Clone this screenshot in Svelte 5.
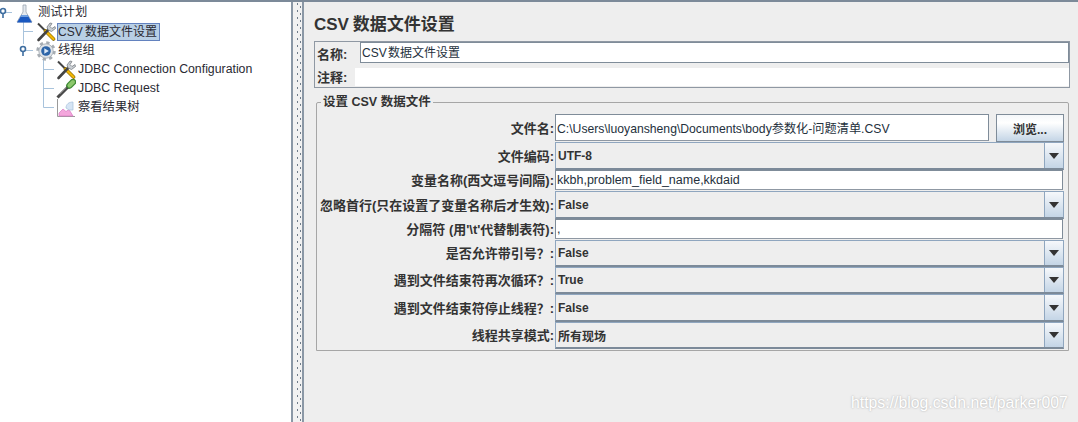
<script>
  const rows = [
    { label: "文件名:", kind: "file", value: "C:\\Users\\luoyansheng\\Documents\\body参数化-问题清单.CSV", h: 28 },
    { label: "文件编码:", kind: "combo", value: "UTF-8", h: 28 },
    { label: "变量名称(西文逗号间隔):", kind: "text", value: "kkbh,problem_field_name,kkdaid", h: 21 },
    { label: "忽略首行(只在设置了变量名称后才生效):", kind: "combo", value: "False", h: 28 },
    { label: "分隔符 (用'\\t'代替制表符):", kind: "text", value: ",", h: 21 },
    { label: "是否允许带引号\uFF1F:", kind: "combo", value: "False", h: 27 },
    { label: "遇到文件结束符再次循环\uFF1F:", kind: "combo", value: "True", h: 27 },
    { label: "遇到文件结束符停止线程\uFF1F:", kind: "combo", value: "False", h: 28 },
    { label: "线程共享模式:", kind: "combo", value: "所有现场", h: 27 }
  ];
</script>

<style>
  :global(body) {
    margin: 0;
    background: #eeeeee;
  }

  .window {
    position: relative;
    width: 1078px;
    height: 422px;
    display: flex;
    overflow: hidden;
    box-sizing: border-box;
    border-top: 2px solid #7c8a99;
    font-family: "Liberation Sans", "Noto Sans CJK SC", sans-serif;
    color: #222222;
  }

  /* tree */
  .tree {
    position: relative;
    width: 293px;
    flex: none;
    background: #ffffff;
    border-right: 2px solid #8b98a6;
    padding-top: 1px;
    box-sizing: border-box;
    font-size: 12px;
  }
  .lines {
    position: absolute;
    left: 0;
    top: -2px;
  }
  .node {
    position: relative;
    height: 19px;
    display: flex;
    align-items: center;
    gap: 1px;
  }
  .lvl0 { padding-left: 16px; }
  .lvl1 { padding-left: 36px; }
  .lvl2 { padding-left: 56px; }
  .node svg { flex: none; }
  .node span {
    padding: 0 1px;
    line-height: 17px;
    white-space: nowrap;
    font-size: 12.3px;
    color: #2a2a33;
  }
  .node .sel {
    background: #b8cfe5;
    outline: 1px solid #6382bf;
    outline-offset: -1px;
    height: 18px;
    line-height: 18px;
    width: 101px;
    font-size: 12px;
    word-spacing: -1px;
  }

  .divider {
    width: 9px;
    flex: none;
    background-color: #f2f2f2;
    background-image:
      linear-gradient(#6f7c8a 2px, transparent 2px),
      linear-gradient(#6f7c8a 2px, transparent 2px);
    background-size: 1px 7px, 1px 7px;
    background-position: 4px 1px, 7px 4px;
    background-repeat: repeat-y;
  }

  /* panel */
  .panel {
    flex: 1;
    min-width: 0;
    border-left: 2px solid #8b98a6;
    padding: 0 8px 0 10px;
  }
  h1 {
    margin: 12px 0 5px;
    font-size: 17px;
    line-height: 22px;
    font-weight: bold;
    color: #333333;
    word-spacing: -1px;
  }
  .names {
    box-sizing: border-box;
    height: 47px;
    border: 1px solid #8f98a3;
    display: grid;
    grid-template-columns: 40px 1fr;
    grid-template-rows: 21px 18px;
    row-gap: 5px;
    width: 756px;
  }
  .names label {
    font-size: 13px;
    font-weight: bold;
    padding-left: 2px;
    line-height: 17px;
    align-self: end;
    color: #333333;
  }
  .names .name-input {
    margin-left: 5px;
    background: #ffffff;
    border: 1px solid #7f8c99;
    font-size: 12px;
    line-height: 20px;
    padding-left: 1px;
    box-sizing: border-box;
    word-spacing: -2px;
    color: #24303c;
  }
  .names .note {
    background: #ffffff;
  }

  fieldset {
    box-sizing: border-box;
    width: 753px;
    height: 256px;
    margin: 7px 0 0 2px;
    padding: 5px 4px 0 0;
    border: 1px solid #a6a6a6;
    border-radius: 2px 2px 0 0;
    min-inline-size: 0;
    display: block;
  }
  legend {
    margin-left: 4px;
    padding: 0 2px;
    font-size: 12.5px;
    font-weight: bold;
    color: #333333;
    line-height: 14px;
  }
  .row {
    display: grid;
    grid-template-columns: 237px 1fr;
    column-gap: 1px;
    align-items: stretch;
  }
  .row label {
    text-align: right;
    font-size: 13px;
    font-weight: bold;
    align-self: center;
    white-space: nowrap;
    color: #333333;
    padding-bottom: 2px;
  }
  .field {
    display: flex;
    min-width: 0;
    font-size: 12px;
  }
  .input {
    flex: 1;
    box-sizing: border-box;
    background: #ffffff;
    border: 1px solid #7f8c99;
    border-bottom-color: #8f98a3;
    padding-left: 1px;
    display: flex;
    align-items: center;
    margin: 0 1px 1px 0;
    white-space: nowrap;
    color: #24303c;
    font-size: 12.5px;
  }
  .input.file {
    margin: 0 7px 1px 0;
    flex: 0 0 434px;
    font-size: 12.2px;
  }
  .browse {
    flex: 1;
    box-sizing: border-box;
    margin: 0;
    border: 1px solid #7f8c99;
    background: linear-gradient(#f4f7fa, #ffffff 30%, #c4d5e6);
    font: inherit;
    font-size: 12px;
    font-weight: bold;
    padding: 0;
    color: #333333;
  }
  .combo {
    flex: 1;
    display: flex;
    box-sizing: border-box;
    border: 1px solid #8fa6bf;
    border-bottom: 2px solid #7c8a99;
  }
  .combo .val {
    flex: 1;
    padding-left: 2px;
    display: flex;
    align-items: center;
    font-weight: bold;
    color: #333333;
    background: #eeeeee;
  }
  .arrow {
    width: 18px;
    flex: none;
    border-left: 1px solid #8fa6bf;
    background: linear-gradient(#f6f8fb, #c4d5e6);
    display: flex;
    align-items: center;
    justify-content: center;
  }
  .arrow i {
    width: 0;
    height: 0;
    border: 5px solid transparent;
    border-top: 6px solid #333333;
    border-bottom: 0;
  }

  .watermark {
    position: absolute;
    left: 851px;
    top: 391px;
    font-size: 15.8px;
    line-height: 20px;
    color: #ffffff;
    text-shadow: 0 0 2px rgba(150, 150, 150, 0.8);
    white-space: nowrap;
  }
</style>

<div class="window">
  <div class="tree">
    <svg class="lines" width="90" height="125" fill="none" stroke="#a8c3dc">
      <path d="M4.5 12.5H12M23.5 20V44M23.5 31.5H33M23.5 50.5H33M43.5 60V107.5M43.5 69.5H54M43.5 88.5H54M43.5 107.5H54" />
      <circle cx="3" cy="11" r="2.5" stroke="#3f6ea0" stroke-width="1.6" fill="#fff" />
      <path d="M3 14V18" stroke="#3f6ea0" stroke-width="1.6" />
      <circle cx="23" cy="49" r="2.5" stroke="#3f6ea0" stroke-width="1.6" fill="#fff" />
      <path d="M23 52V56" stroke="#3f6ea0" stroke-width="1.6" />
    </svg>

    <!-- flask -->
    <div class="node lvl0">
      <svg width="20" height="20" viewBox="0 0 20 20">
        <path d="M7 2h3v7l6 10H1l6-10z" fill="#e4e9ef" stroke="#9aa5b1" stroke-width=".8" />
        <path d="M5.5 12h6L16 19.5H1z" fill="#1a58c0" />
        <path d="M5.5 12h6l1 2h-8z" fill="#6f9fe0" />
      </svg>
      <span>测试计划</span>
    </div>

    <!-- tools -->
    <div class="node lvl1">
      <svg width="20" height="20" viewBox="0 0 20 20">
        <path d="M2 1.500l7.500 7.500" stroke="#444" stroke-width="2" />
        <path d="M9.500 9l8 8" stroke="#8a6a00" stroke-width="3.600" stroke-linecap="round" />
        <path d="M9.500 9l8 8" stroke="#f2b705" stroke-width="2.400" stroke-linecap="round" />
        <path d="M2.500 18L13.500 6.500" stroke="#444" stroke-width="2.600" stroke-linecap="round" />
        <path d="M12 8l-1-3 3-4 2 .5-2 3 2 2 3-2 .5 2-4 3z" fill="#c9ced3" stroke="#6d7379" stroke-width=".7" />
      </svg>
      <span class="sel">CSV 数据文件设置</span>
    </div>

    <!-- gear -->
    <div class="node lvl1">
      <svg width="20" height="20" viewBox="0 0 20 20">
        <circle cx="10" cy="10" r="8.200" fill="none" stroke="#a7adb3" stroke-width="3" stroke-dasharray="3.200 3.240" />
        <circle cx="10" cy="10" r="7.200" fill="#dfe3e7" stroke="#a0a7ae" stroke-width=".8" />
        <circle cx="10" cy="10" r="4.800" fill="#2c64a8" />
        <path d="M8.300 7.200l4.500 2.800-4.500 2.800z" fill="#dce8f5" />
      </svg>
      <span>线程组</span>
    </div>

    <div class="node lvl2">
      <svg width="20" height="20" viewBox="0 0 20 20">
        <path d="M2 1.500l7.500 7.500" stroke="#444" stroke-width="2" />
        <path d="M9.500 9l8 8" stroke="#8a6a00" stroke-width="3.600" stroke-linecap="round" />
        <path d="M9.500 9l8 8" stroke="#f2b705" stroke-width="2.400" stroke-linecap="round" />
        <path d="M2.500 18L13.500 6.500" stroke="#444" stroke-width="2.600" stroke-linecap="round" />
        <path d="M12 8l-1-3 3-4 2 .5-2 3 2 2 3-2 .5 2-4 3z" fill="#c9ced3" stroke="#6d7379" stroke-width=".7" />
      </svg>
      <span>JDBC Connection Configuration</span>
    </div>

    <!-- dropper -->
    <div class="node lvl2">
      <svg width="20" height="20" viewBox="0 0 20 20">
        <path d="M1.500 18.500L12 8" stroke="#4a4a4a" stroke-width="3" />
        <path d="M3.500 15L11 7.500" stroke="#b5b5b5" />
        <path d="M11 9l-1-1 3-3 2 2-3 3z" fill="#333" />
        <path d="M13.500 6.500l3.500-3.500" stroke="#3f8a35" stroke-width="6.500" stroke-linecap="round" />
        <path d="M13.500 6.500l3.500-3.500" stroke="#8cc86c" stroke-width="4" stroke-linecap="round" />
      </svg>
      <span>JDBC Request</span>
    </div>

    <!-- chart -->
    <div class="node lvl2">
      <svg width="20" height="20" viewBox="0 0 20 20">
        <path d="M1.500 1v17.500H19" fill="none" stroke="#9a9a9a" />
        <path d="M3 18v-3l4-4 3 2.500 3-2 4 6.500z" fill="#f4a6dc" stroke="#d877c2" stroke-width=".7" />
        <path d="M10 10c0-4 3-6 7-6v8h-4z" fill="#d6e5f5" stroke="#a7c0da" stroke-width=".7" />
      </svg>
      <span>察看结果树</span>
    </div>
  </div>

  <div class="divider"></div>

  <div class="panel">
    <h1>CSV 数据文件设置</h1>

    <div class="names">
      <label for="name">名称:</label>
      <div class="name-input" id="name">CSV 数据文件设置</div>
      <label for="note">注释:</label>
      <div class="note" id="note"></div>
    </div>

    <fieldset>
      <legend>设置 CSV 数据文件</legend>
      {#each rows as row}
        <div class="row" style="height: {row.h}px">
          <label>{row.label}</label>
          <div class="field">
            {#if row.kind === "combo"}
              <div class="combo">
                <div class="val">{row.value}</div>
                <div class="arrow"><i></i></div>
              </div>
            {:else if row.kind === "file"}
              <div class="input file">{row.value}</div>
              <button class="browse">浏览...</button>
            {:else}
              <div class="input">{row.value}</div>
            {/if}
          </div>
        </div>
      {/each}
    </fieldset>
  </div>

  <div class="watermark">https://blog.csdn.net/parker007</div>
</div>
